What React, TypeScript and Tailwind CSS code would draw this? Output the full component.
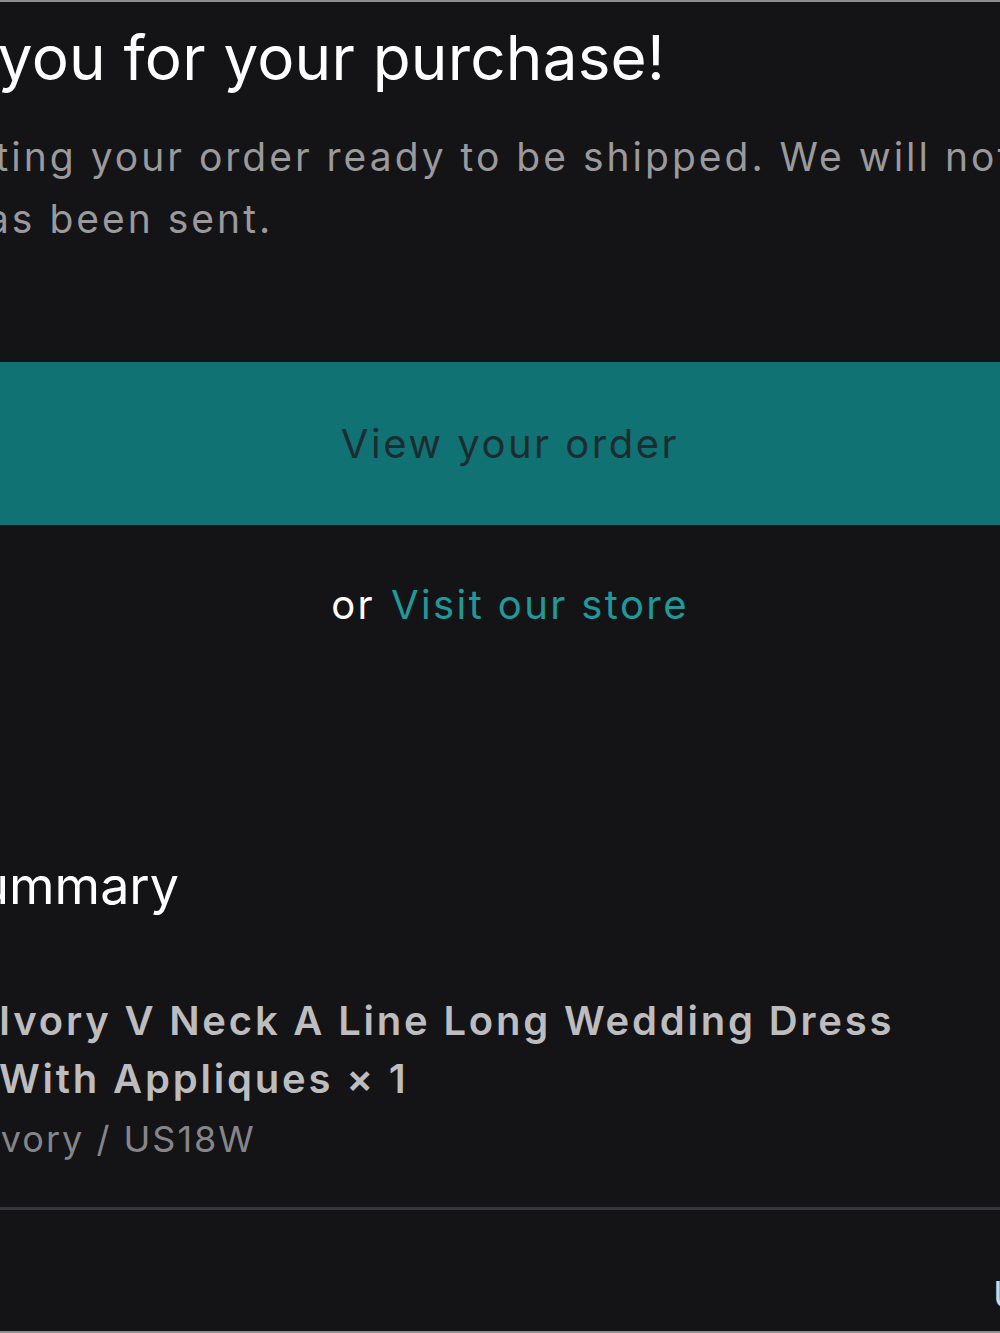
import React from 'react'

const font = { fontFamily: 'Inter, "Noto Sans", sans-serif' }

export default function App() {
  return (
    <div
      className="w-[1000px] h-[1333px] overflow-hidden bg-[#141417] border-t-2 border-b-2 border-[#8d8d90]"
      style={font}
    >
      {/* content column, wider than the crop, centred on x=510 */}
      <div className="ml-[-203px] w-[1426px] flex flex-col">
        <h1 className="mt-[18px] text-[62px] leading-[76px] font-normal text-white tracking-[0.2px]">
          Thank you for your purchase!
        </h1>
        <p className="mt-[30px] ml-[-5px] text-[39px] leading-[62px] text-[#9a9a9c] tracking-[3px] whitespace-nowrap">
          We&apos;re getting your order ready to be shipped. We will notify you
          <br />
          when it has been sent.
        </p>

        <a
          href="#"
          className="mt-[112px] h-[163px] flex items-center justify-center bg-[#117273] text-[40px] text-[#1c2d31] tracking-[2.5px]"
        >
          View your order
        </a>

        <div className="mt-[55px] flex justify-center items-baseline gap-[16px] text-[40px] leading-[50px] tracking-[2.4px]">
          <span className="text-white">or</span>
          <a href="#" className="text-[#20999a]">Visit our store</a>
        </div>

        <h2 className="mt-[224px] ml-[-1px] text-[52px] leading-[64px] font-normal text-white">
          Order summary
        </h2>

        <div className="mt-[74px] flex gap-[32px]">
          <div className="w-[170px] h-[170px] shrink-0 rounded-lg bg-[#1d1d21]" />
          <div className="flex flex-col">
            <div className="text-[40px] leading-[58px] font-semibold text-[#bdbdbf] tracking-[2.8px]">
              Ivory V Neck A Line Long Wedding Dress
              <br />
              With Appliques × 1
            </div>
            <div className="mt-[2px] ml-[-10px] text-[36px] leading-[58px] text-[#86868a] tracking-[2px]">
              Ivory / US18W
            </div>
          </div>
        </div>

        <div className="mt-[39px] h-[3px] bg-[#38383c]" />

        <div className="mt-[63px] flex text-[37px] leading-[44px] text-[#d6d6d8]">
          <span className="flex-1">Subtotal</span>
          <span className="w-[230px]">US$189.00</span>
        </div>
      </div>
    </div>
  )
}
